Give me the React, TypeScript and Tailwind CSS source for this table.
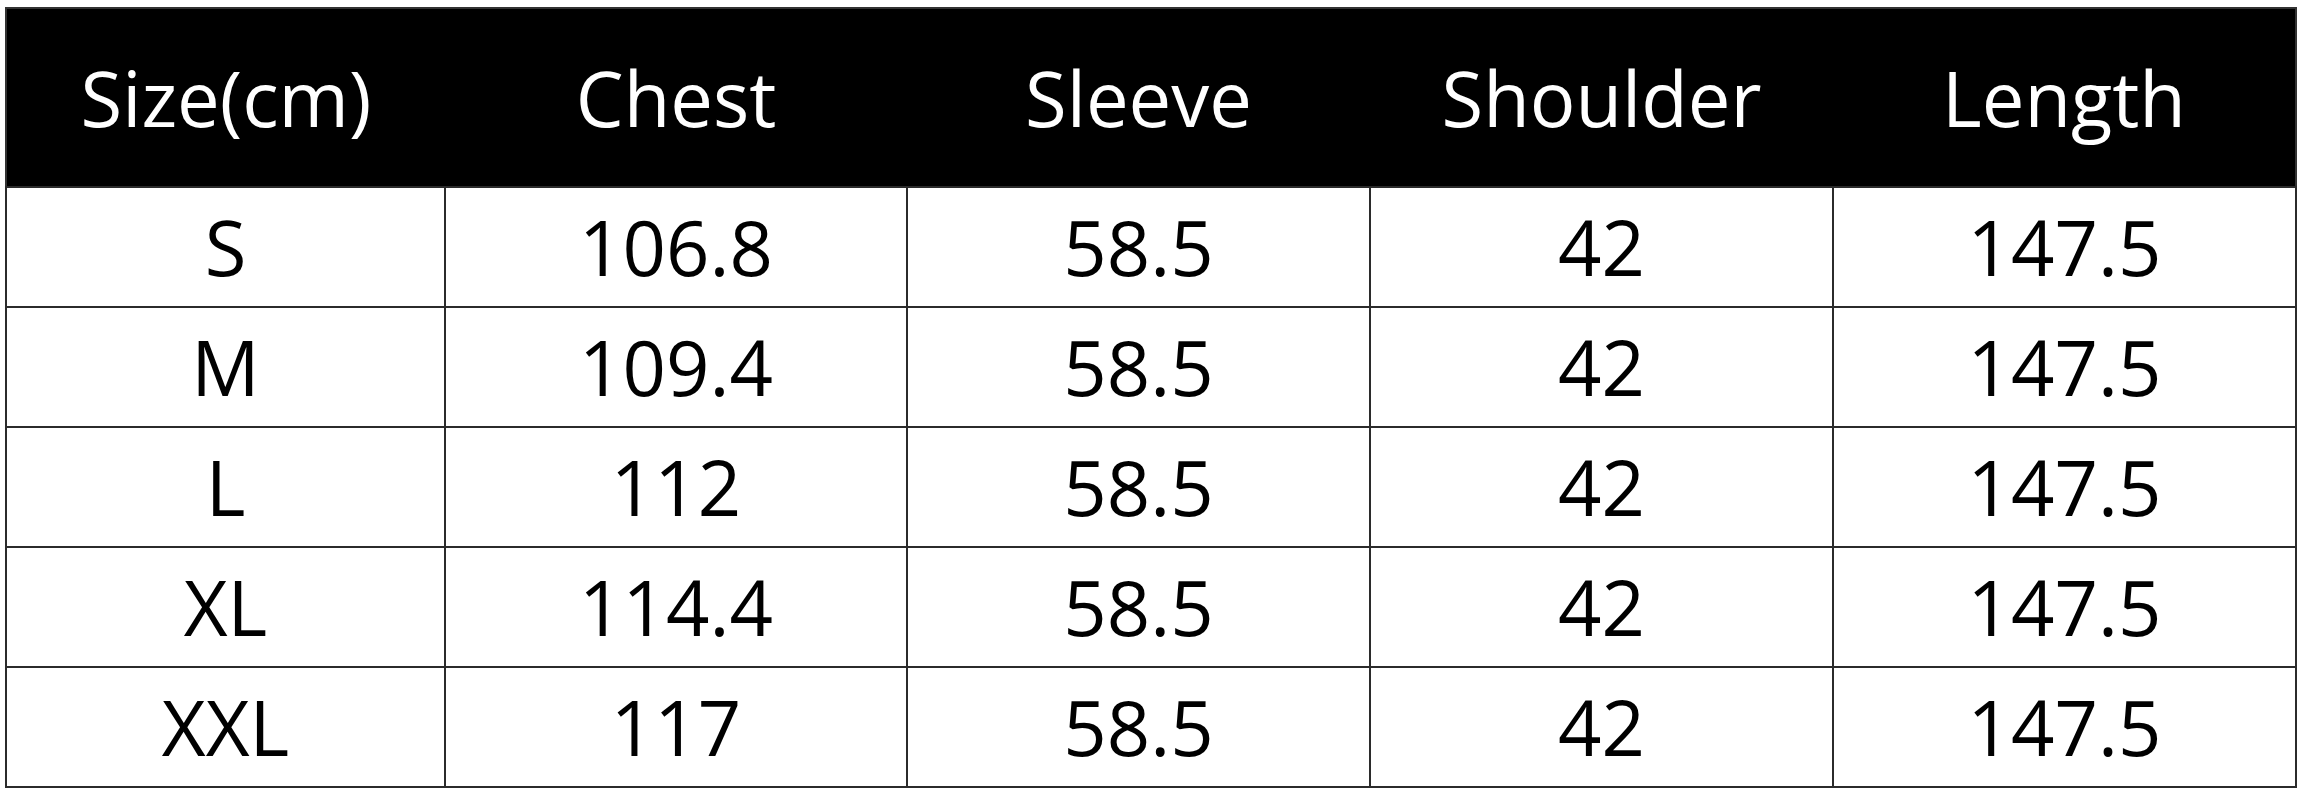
import React from 'react';

const headers = ['Size(cm)', 'Chest', 'Sleeve', 'Shoulder', 'Length'];

const rows: string[][] = [
  ['S', '106.8', '58.5', '42', '147.5'],
  ['M', '109.4', '58.5', '42', '147.5'],
  ['L', '112', '58.5', '42', '147.5'],
  ['XL', '114.4', '58.5', '42', '147.5'],
  ['XXL', '117', '58.5', '42', '147.5'],
];

const colWidths = ['w-[439px]', 'w-[462px]', 'w-[463px]', 'w-[463px]', 'w-[463px]'];

export default function App() {
  return (
    <div
      className="w-[2305px] h-[800px] bg-white pt-[7px] pl-[5px]"
      style={{ fontFamily: '"Open Sans", "Noto Sans", sans-serif' }}
    >
      <table className="border-collapse border-2 border-[#333] text-[76px] leading-none">
        <thead>
          <tr className="bg-black text-white h-[179px]">
            {headers.map((h, i) => (
              <th key={h} className={`${colWidths[i]} font-normal text-center align-middle`}>
                {h}
              </th>
            ))}
          </tr>
        </thead>
        <tbody>
          {rows.map((r) => (
            <tr key={r[0]} className="h-[120px] text-black">
              {r.map((c, i) => (
                <td key={i} className="border-2 border-[#2b2b2b] text-center align-middle">
                  {c}
                </td>
              ))}
            </tr>
          ))}
        </tbody>
      </table>
    </div>
  );
}
